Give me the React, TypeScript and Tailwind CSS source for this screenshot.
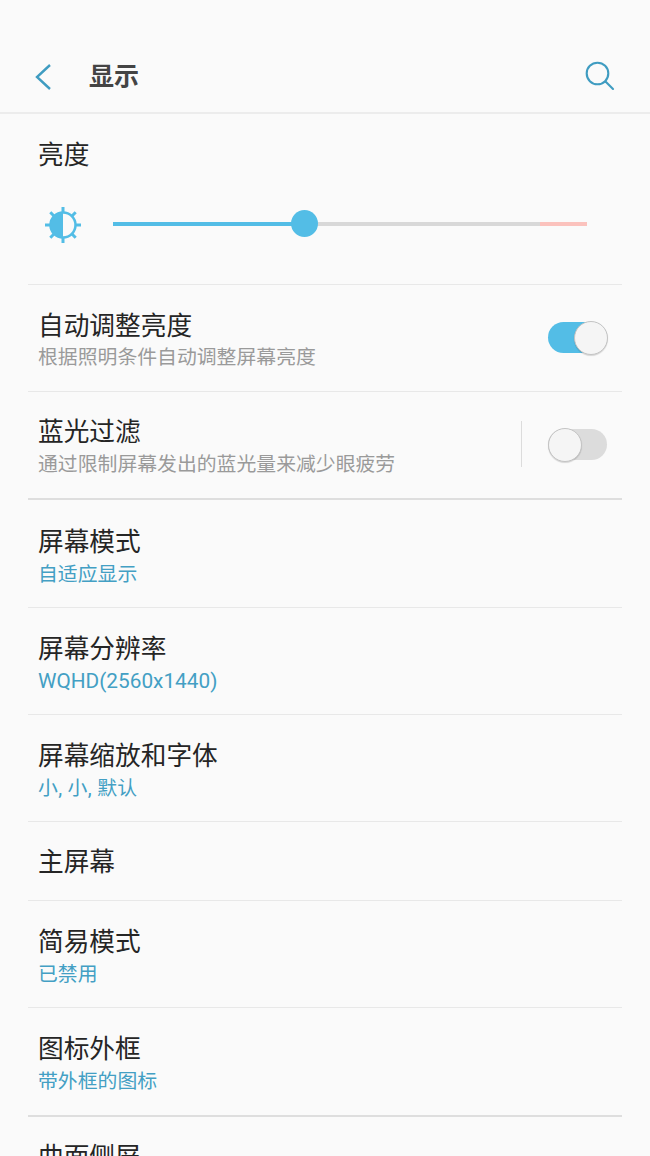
const cjk = "font-['Roboto','Noto_Sans_CJK_SC',sans-serif]";

type RowProps = {
  title: string;
  sub?: string;
  h: string;
  pt: string;
  thick?: boolean;
  subGap?: string;
  subClass?: string;
  children?: React.ReactNode;
};

function Row({ title, sub, h, pt, thick, subGap = 'mt-[4px]', subClass = 'text-[19.85px] text-[#9a9a9a]', children }: RowProps) {
  return (
    <div className={`${h} flex justify-between ${thick ? 'border-b-2 border-[#dedede]' : 'border-b border-[#e8e8e8]'}`}>
      <div className={`pl-[10px] ${pt}`}>
        <div className="text-[25.7px] leading-[32px] text-[#252525]">{title}</div>
        {sub && <div className={`leading-[26px] ${subGap} ${subClass}`}>{sub}</div>}
      </div>
      {children}
    </div>
  );
}

const blue = 'text-[19.85px] text-[#439fc4]';

function Toggle({ on }: { on: boolean }) {
  return (
    <div className={`relative w-[59px] h-[31px] rounded-full ${on ? 'bg-[#53bde6]' : 'bg-[#dcdcdc]'}`}>
      <div className={`absolute top-[-1px] ${on ? 'right-[-1px]' : 'left-0'} w-[34px] h-[34px] rounded-full bg-[#f5f5f5] border border-[#c4c4c4] shadow-[0_1px_1px_rgba(0,0,0,0.15)]`} />
    </div>
  );
}

export default function App() {
  return (
    <div className={`w-[650px] h-[1156px] overflow-hidden bg-[#fafafa] ${cjk}`}>
      <div className="h-[114px] pt-[42px] border-b-2 border-[#ececec] flex items-center">
        <svg width="20" height="28" viewBox="0 0 20 28" className="ml-[34px]" fill="none" stroke="#3f9cc1" strokeWidth="2.4">
          <path d="M16 2 L3 14 L16 26" />
        </svg>
        <div className="ml-[35px] text-[25px] font-bold text-[#444444] leading-[32px]">显示</div>
        <svg width="30" height="30" viewBox="0 0 30 30" className="ml-auto mr-[35px] mb-[2px]" fill="none" stroke="#3f9cc1" strokeWidth="2.1">
          <circle cx="12.5" cy="12.5" r="10.8" />
          <path d="M20.5 20.5 L28 28" strokeLinecap="round" />
        </svg>
      </div>

      <div className="mx-[28px]">
        <div className="h-[171px] border-b border-[#e8e8e8] pl-[10px] pt-[25px]">
          <div className="text-[25.7px] leading-[32px] text-[#252525]">亮度</div>
          <div className="flex items-center mt-[36px]">
            <svg width="36" height="36" viewBox="0 0 36 36" className="ml-[7px]">
              <g stroke="#53bde6" strokeWidth="3">
                <path d="M18 0 V6 M18 30 V36 M0 18 H6 M30 18 H36 M5.3 5.3 L9.5 9.5 M26.5 26.5 L30.7 30.7 M5.3 30.7 L9.5 26.5 M26.5 9.5 L30.7 5.3" />
              </g>
              <circle cx="18" cy="18" r="12.5" fill="none" stroke="#53bde6" strokeWidth="2.5" />
              <path d="M18 5.5 A12.5 12.5 0 0 0 18 30.5 Z" fill="#53bde6" />
            </svg>
            <div className="relative ml-[32px] mb-[2px] w-[474px] h-[4px] bg-[#d8d8d8] flex">
              <div className="w-[190px] bg-[#53bde6]" />
              <div className="ml-auto w-[47px] bg-[#fbc2bd]" />
              <div className="absolute left-[178px] top-[-12px] w-[27px] h-[27px] rounded-full bg-[#53bde6]" />
            </div>
          </div>
        </div>

        <Row title="自动调整亮度" sub="根据照明条件自动调整屏幕亮度" h="h-[107px]" pt="pt-[25px]" subGap="mt-[3px]">
          <div className="mt-[37px] mr-[15px]">
            <Toggle on />
          </div>
        </Row>
        <Row title="蓝光过滤" sub="通过限制屏幕发出的蓝光量来减少眼疲劳" h="h-[108px]" pt="pt-[24px]" thick>
          <div className="flex items-center mt-[29px] mb-auto">
            <div className="w-px h-[46px] bg-[#dcdcdc] mr-[26px]" />
            <div className="mr-[15px] mt-[1px]">
              <Toggle on={false} />
            </div>
          </div>
        </Row>
        <Row title="屏幕模式" sub="自适应显示" h="h-[108px]" pt="pt-[26px]" subClass={blue} />
        <Row title="屏幕分辨率" sub="WQHD(2560x1440)" h="h-[107px]" pt="pt-[25px]" subGap="mt-[3px]" subClass="text-[20.8px] text-[#439fc4]" />
        <Row title="屏幕缩放和字体" sub="小, 小, 默认" h="h-[107px]" pt="pt-[25px]" subClass={`${blue} tracking-[0.3px]`} />
        <Row title="主屏幕" h="h-[79px]" pt="pt-[24px]" />
        <Row title="简易模式" sub="已禁用" h="h-[107px]" pt="pt-[25px]" subClass={blue} />
        <Row title="图标外框" sub="带外框的图标" h="h-[109px]" pt="pt-[25px]" subClass={blue} thick />
        <div className="pl-[10px] pt-[24px] text-[25.7px] leading-[32px] text-[#252525]">曲面侧屏</div>
      </div>
    </div>
  );
}
